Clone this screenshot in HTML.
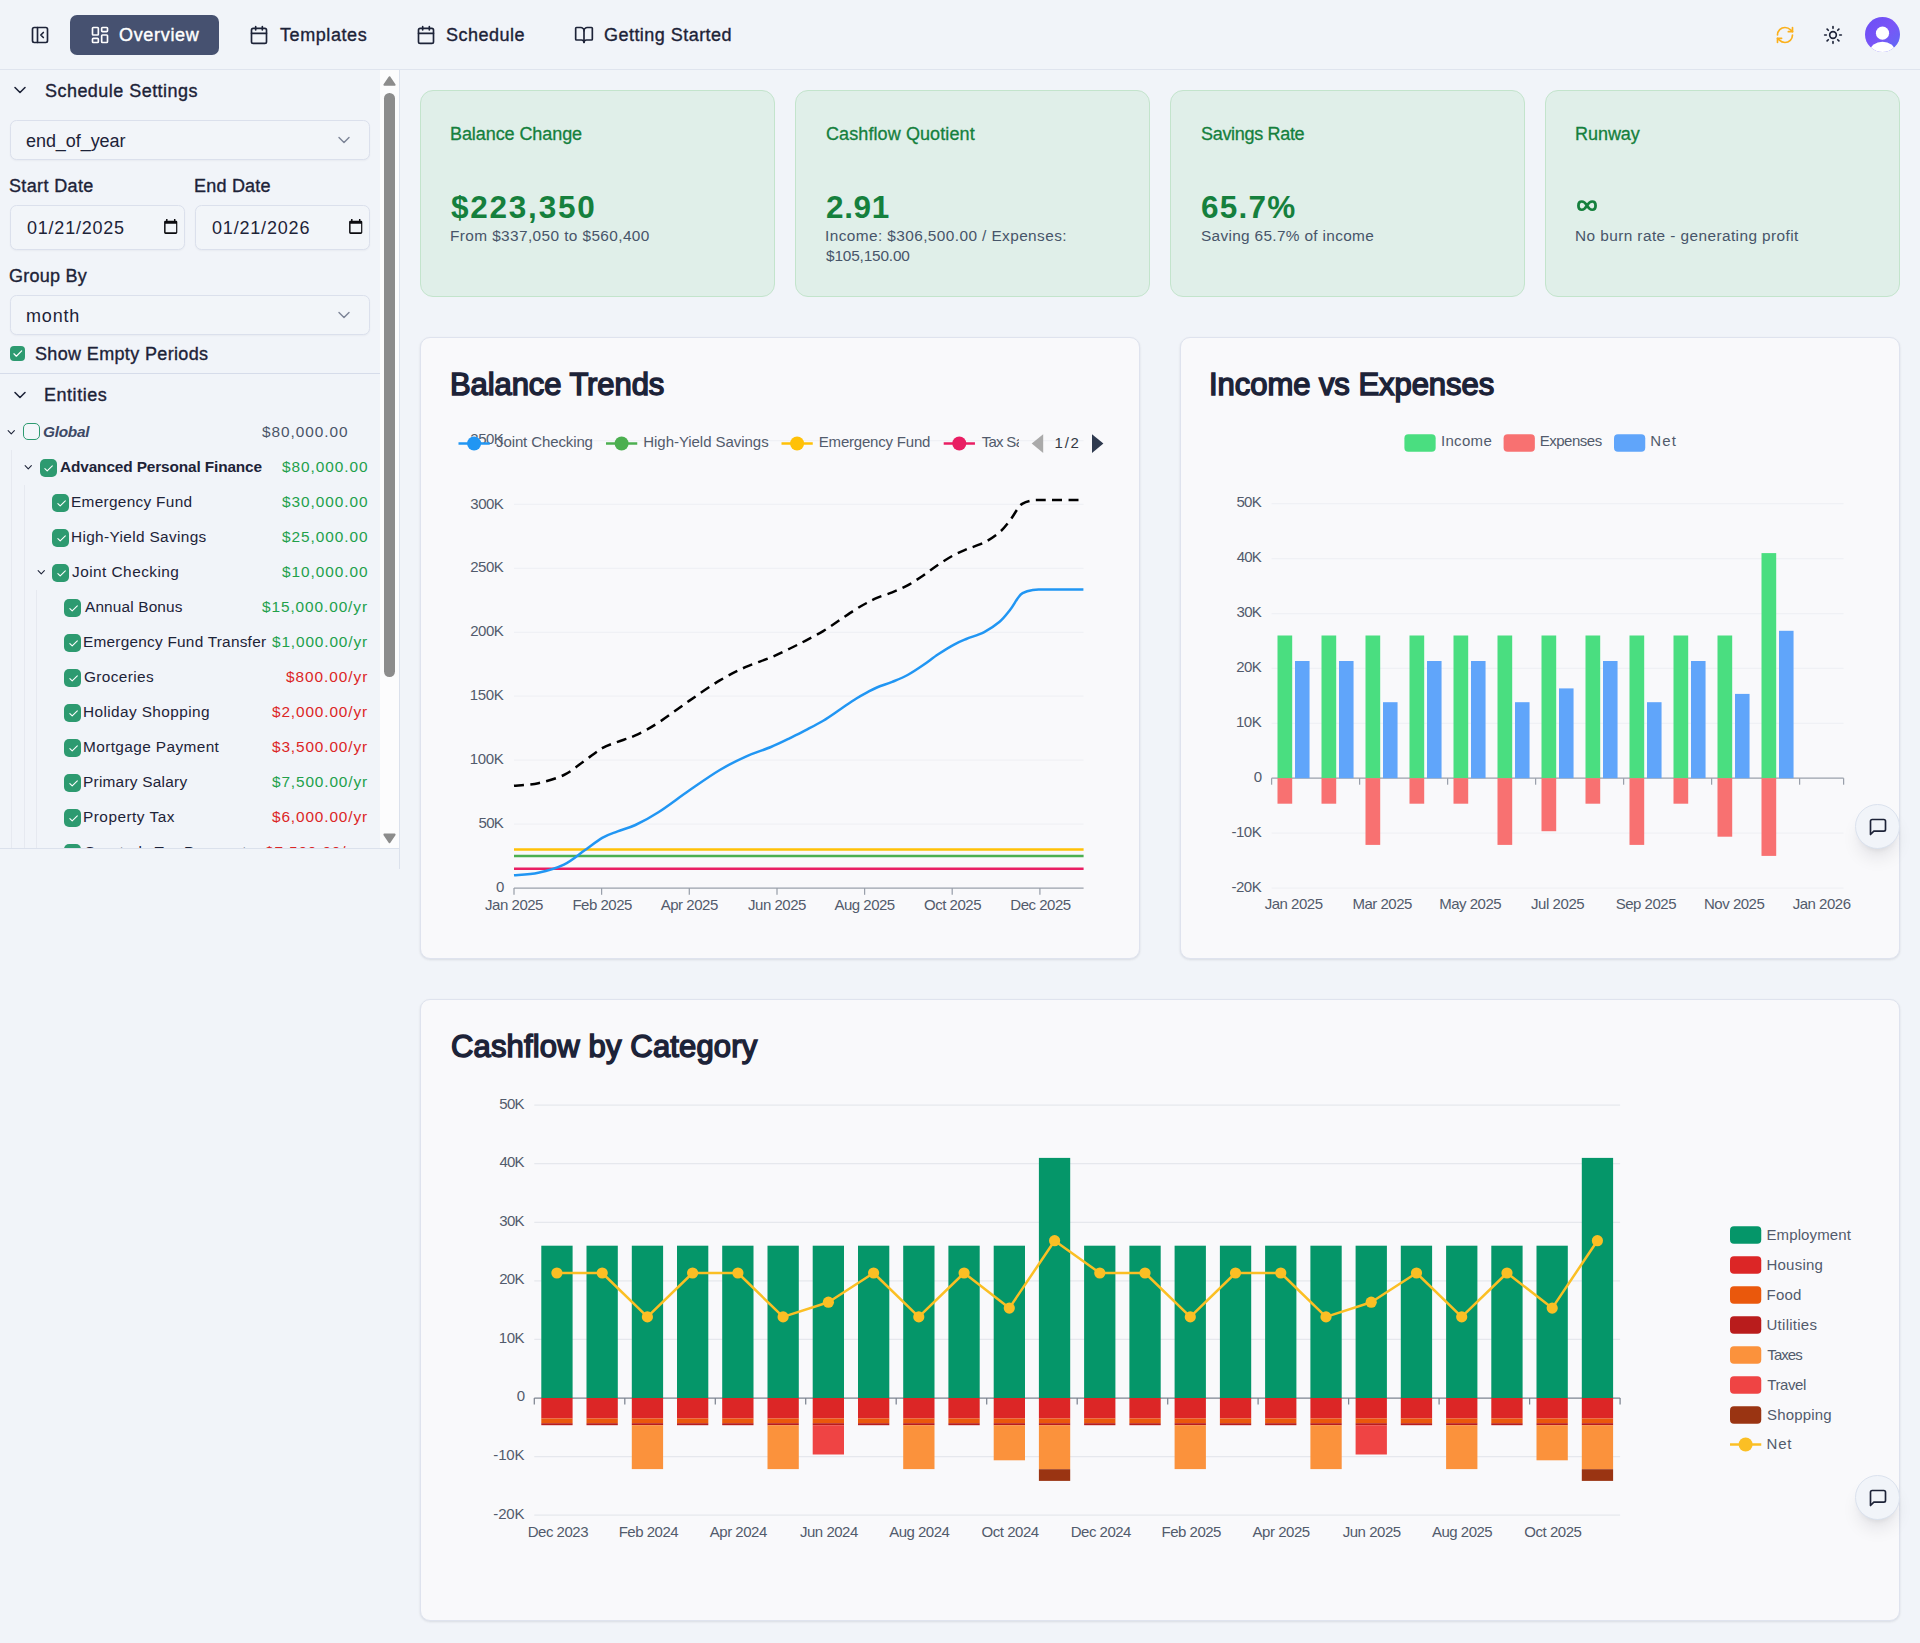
<!DOCTYPE html>
<html lang="en"><head><meta charset="utf-8"><title>Overview</title>
<style>
html,body{margin:0;padding:0}
body{width:1920px;height:1643px;overflow:hidden;background:#f1f4f9;font-family:"Liberation Sans", sans-serif;position:relative}
.a{position:absolute;box-sizing:content-box}
.t{position:absolute;white-space:nowrap;font-family:"Liberation Sans", sans-serif}
.box{position:absolute;box-sizing:border-box;border:1px solid #dbe0ec;border-radius:6.5px;background:#f2f5f9;box-shadow:0 1px 2px rgba(15,23,42,0.04)}
svg{display:block;overflow:visible}
</style></head><body>
<header class="a" style="left:0;top:0;width:1920px;height:69px;border-bottom:1px solid #dfe4ee"></header>
<svg class="a" style="left:30px;top:25px" width="20" height="20" viewBox="0 0 24 24" fill="none" stroke="#1d2338" stroke-width="2" stroke-linecap="round" stroke-linejoin="round" ><rect width="18" height="18" x="3" y="3" rx="2"/><path d="M9 3v18"/><path d="m16 15-3-3 3-3"/></svg>
<nav>
<div class="a" style="left:70px;top:15px;width:149px;height:40px;border-radius:7px;background:#465170"></div>
<svg class="a" style="left:90px;top:25px" width="20" height="20" viewBox="0 0 24 24" fill="none" stroke="#ffffff" stroke-width="2" stroke-linecap="round" stroke-linejoin="round" ><rect width="7" height="9" x="3" y="3" rx="1"/><rect width="7" height="5" x="14" y="3" rx="1"/><rect width="7" height="9" x="14" y="12" rx="1"/><rect width="7" height="5" x="3" y="16" rx="1"/></svg>
<div class="t" style="top:25px;font-size:18px;line-height:20px;color:#ffffff;letter-spacing:0.685px;-webkit-text-stroke:0.4px #ffffff;left:119px;">Overview</div>
<svg class="a" style="left:249px;top:25px" width="20" height="20" viewBox="0 0 24 24" fill="none" stroke="#1d2338" stroke-width="2" stroke-linecap="round" stroke-linejoin="round" ><path d="M8 2v4"/><path d="M16 2v4"/><rect width="18" height="18" x="3" y="4" rx="2"/><path d="M3 10h18"/></svg>
<div class="t" style="top:25px;font-size:18px;line-height:20px;color:#1d2338;letter-spacing:0.577px;-webkit-text-stroke:0.35px #1d2338;left:280px;">Templates</div>
<svg class="a" style="left:416px;top:25px" width="20" height="20" viewBox="0 0 24 24" fill="none" stroke="#1d2338" stroke-width="2" stroke-linecap="round" stroke-linejoin="round" ><path d="M8 2v4"/><path d="M16 2v4"/><rect width="18" height="18" x="3" y="4" rx="2"/><path d="M3 10h18"/></svg>
<div class="t" style="top:25px;font-size:18px;line-height:20px;color:#1d2338;letter-spacing:0.480px;-webkit-text-stroke:0.35px #1d2338;left:446px;">Schedule</div>
<svg class="a" style="left:574.2px;top:25px" width="20" height="20" viewBox="0 0 24 24" fill="none" stroke="#1d2338" stroke-width="2" stroke-linecap="round" stroke-linejoin="round" ><path d="M12 7v14"/><path d="M3 18a1 1 0 0 1-1-1V4a1 1 0 0 1 1-1h5a4 4 0 0 1 4 4 4 4 0 0 1 4-4h5a1 1 0 0 1 1 1v13a1 1 0 0 1-1 1h-6a3 3 0 0 0-3 3 3 3 0 0 0-3-3z"/></svg>
<div class="t" style="top:25px;font-size:18px;line-height:20px;color:#1d2338;letter-spacing:0.464px;-webkit-text-stroke:0.35px #1d2338;left:604px;">Getting Started</div>
</nav>
<svg class="a" style="left:1775px;top:25px" width="20" height="20" viewBox="0 0 24 24" fill="none" stroke="#fbb01c" stroke-width="2" stroke-linecap="round" stroke-linejoin="round" ><path d="M3 12a9 9 0 0 1 9-9 9.75 9.75 0 0 1 6.74 2.74L21 8"/><path d="M21 3v5h-5"/><path d="M21 12a9 9 0 0 1-9 9 9.75 9.75 0 0 1-6.74-2.74L3 16"/><path d="M8 16H3v5"/></svg>
<svg class="a" style="left:1823px;top:25px" width="20" height="20" viewBox="0 0 24 24" fill="none" stroke="#1d2338" stroke-width="2" stroke-linecap="round" stroke-linejoin="round" ><circle cx="12" cy="12" r="4"/><path d="M12 2v2"/><path d="M12 20v2"/><path d="m4.93 4.93 1.41 1.41"/><path d="m17.66 17.66 1.41 1.41"/><path d="M2 12h2"/><path d="M20 12h2"/><path d="m6.34 17.66-1.41 1.41"/><path d="m19.07 4.93-1.41 1.41"/></svg>
<svg class="a" style="left:1865px;top:17px" width="35" height="35" viewBox="0 0 35 35">
<defs><clipPath id="av"><circle cx="17.5" cy="17.5" r="17.5"/></clipPath>
<linearGradient id="avg" x1="0" y1="0" x2="1" y2="1"><stop offset="0" stop-color="#6a4df5"/><stop offset="0.5" stop-color="#7a55f7"/><stop offset="1" stop-color="#5b6cf5"/></linearGradient></defs>
<g clip-path="url(#av)"><rect width="35" height="35" fill="url(#avg)"/>
<circle cx="17.5" cy="16.2" r="6.6" fill="#ffffff"/><ellipse cx="17.5" cy="34.5" rx="12.5" ry="9.8" fill="#ffffff"/></g></svg>
<aside class="a" style="left:0;top:70px;width:399px;height:778px;border-right:1px solid #dbe1ec;border-bottom:1px solid #dbe1ec"></aside>
<div class="a" style="left:399px;top:848px;width:1px;height:21px;background:#dbe1ec"></div>
<div class="a" style="left:380px;top:70px;width:19px;height:778px;background:#fcfcfd"></div>
<div class="a" style="left:384.1px;top:92.8px;width:10.8px;height:584px;border-radius:5.4px;background:#8c8c8c"></div>
<svg class="a" style="left:380px;top:70px" width="19" height="778" viewBox="0 0 19 778"><path d="M4.4 14.8 L9.5 7.2 L14.6 14.8 Z" fill="#8c8c8c" stroke="#8c8c8c" stroke-width="2" stroke-linejoin="round"/><path d="M4.4 764.6 L9.5 772.2 L14.6 764.6 Z" fill="#8c8c8c" stroke="#8c8c8c" stroke-width="2" stroke-linejoin="round"/></svg>
<svg class="a" style="left:10px;top:80px" width="20" height="20" viewBox="0 0 24 24" fill="none" stroke="#1d2338" stroke-width="1.9" stroke-linecap="round" stroke-linejoin="round" ><path d="m6 9 6 6 6-6"/></svg>
<div class="t" style="top:81px;font-size:18px;line-height:20px;color:#1d2338;letter-spacing:0.461px;-webkit-text-stroke:0.35px #1d2338;left:45px;">Schedule Settings</div>
<div class="box" style="left:10px;top:120px;width:360px;height:40px"></div>
<div class="t" style="top:131px;font-size:18px;line-height:20px;color:#1d2338;letter-spacing:-0.062px;left:26px;">end_of_year</div>
<svg class="a" style="left:334px;top:130px" width="20" height="20" viewBox="0 0 24 24" fill="none" stroke="#7d8597" stroke-width="1.7" stroke-linecap="round" stroke-linejoin="round" ><path d="m6 9 6 6 6-6"/></svg>
<div class="t" style="top:176px;font-size:18px;line-height:20px;color:#1d2338;letter-spacing:0.365px;-webkit-text-stroke:0.35px #1d2338;left:9px;">Start Date</div>
<div class="t" style="top:176px;font-size:18px;line-height:20px;color:#1d2338;letter-spacing:0.218px;-webkit-text-stroke:0.35px #1d2338;left:194px;">End Date</div>
<div class="box" style="left:10px;top:205px;width:175px;height:45px"></div>
<div class="t" style="top:218px;font-size:18px;line-height:20px;color:#1d2338;letter-spacing:0.775px;left:27px;">01/21/2025</div>
<svg class="a" style="left:164.4px;top:219.2px" width="13.7" height="15.2" viewBox="0 0 14 15.2" preserveAspectRatio="none"><path fill-rule="evenodd" fill="#0b0b0f" d="M1.3 1.7h11.1a1.2 1.2 0 0 1 1.2 1.2v10.6a1.5 1.5 0 0 1-1.5 1.5h-10.5a1.5 1.5 0 0 1-1.5-1.5v-10.6a1.2 1.2 0 0 1 1.2-1.2zM1.6 4.7v8.5h10.8v-8.5z"/><rect x="2.1" y="0" width="1.5" height="2.4" fill="#0b0b0f"/><rect x="10.2" y="0" width="1.5" height="2.4" fill="#0b0b0f"/></svg>
<div class="box" style="left:195px;top:205px;width:175px;height:45px"></div>
<div class="t" style="top:218px;font-size:18px;line-height:20px;color:#1d2338;letter-spacing:0.812px;left:212px;">01/21/2026</div>
<svg class="a" style="left:349.4px;top:219.2px" width="13.7" height="15.2" viewBox="0 0 14 15.2" preserveAspectRatio="none"><path fill-rule="evenodd" fill="#0b0b0f" d="M1.3 1.7h11.1a1.2 1.2 0 0 1 1.2 1.2v10.6a1.5 1.5 0 0 1-1.5 1.5h-10.5a1.5 1.5 0 0 1-1.5-1.5v-10.6a1.2 1.2 0 0 1 1.2-1.2zM1.6 4.7v8.5h10.8v-8.5z"/><rect x="2.1" y="0" width="1.5" height="2.4" fill="#0b0b0f"/><rect x="10.2" y="0" width="1.5" height="2.4" fill="#0b0b0f"/></svg>
<div class="t" style="top:266px;font-size:18px;line-height:20px;color:#1d2338;letter-spacing:0.244px;-webkit-text-stroke:0.35px #1d2338;left:9px;">Group By</div>
<div class="box" style="left:10px;top:295px;width:360px;height:39.5px"></div>
<div class="t" style="top:306px;font-size:18px;line-height:20px;color:#1d2338;letter-spacing:0.834px;left:26px;">month</div>
<svg class="a" style="left:334px;top:305px" width="20" height="20" viewBox="0 0 24 24" fill="none" stroke="#7d8597" stroke-width="1.7" stroke-linecap="round" stroke-linejoin="round" ><path d="m6 9 6 6 6-6"/></svg>
<div class="a" style="left:10px;top:346.3px;width:15px;height:15px;border-radius:4px;background:#2d9a70"></div>
<svg class="a" style="left:11.7px;top:348px" width="11.6" height="11.6" viewBox="0 0 24 24" fill="none" stroke="#ffffff" stroke-width="2.5" stroke-linecap="round" stroke-linejoin="round" ><path d="M20 6 9 17l-5-5"/></svg>
<div class="t" style="top:344px;font-size:18px;line-height:20px;color:#1d2338;letter-spacing:0.353px;-webkit-text-stroke:0.35px #1d2338;left:35px;">Show Empty Periods</div>
<div class="a" style="left:0;top:373px;width:380px;height:1px;background:#d6dcea"></div>
<svg class="a" style="left:10px;top:385px" width="20" height="20" viewBox="0 0 24 24" fill="none" stroke="#1d2338" stroke-width="1.9" stroke-linecap="round" stroke-linejoin="round" ><path d="m6 9 6 6 6-6"/></svg>
<div class="t" style="top:385px;font-size:18px;line-height:20px;color:#1d2338;letter-spacing:0.529px;-webkit-text-stroke:0.35px #1d2338;left:44px;">Entities</div>
<div class="a" style="left:0;top:410px;width:380px;height:438px;overflow:hidden">
<div class="a" style="left:11px;top:40px;width:1px;height:500px;background:#e6e9f0"></div>
<div class="a" style="left:24px;top:75px;width:1px;height:500px;background:#e6e9f0"></div>
<div class="a" style="left:36px;top:180px;width:1px;height:500px;background:#e6e9f0"></div>
<svg class="a" style="left:5.0px;top:15.949999999999989px" width="12.5" height="12.5" viewBox="0 0 24 24" fill="none" stroke="#1d2338" stroke-width="2.1" stroke-linecap="round" stroke-linejoin="round" ><path d="m6 9 6 6 6-6"/></svg>
<div class="a" style="left:22.5px;top:12.5px;width:15px;height:15px;border-radius:5px;border:1.25px solid #2d9a70;background:#f3f6fa"></div>
<div class="t" style="top:13px;font-size:15.4px;line-height:17px;color:#3d4966;font-weight:700;letter-spacing:-0.279px;font-style:italic;left:43px;">Global</div>
<div class="t" style="top:13px;font-size:15.4px;line-height:17px;color:#4a5568;letter-spacing:0.949px;left:262px;">$80,000.00</div>
<svg class="a" style="left:21.95px;top:50.94999999999999px" width="12.5" height="12.5" viewBox="0 0 24 24" fill="none" stroke="#1d2338" stroke-width="2.1" stroke-linecap="round" stroke-linejoin="round" ><path d="m6 9 6 6 6-6"/></svg>
<div class="a" style="left:40px;top:49.05000000000001px;width:17px;height:17.5px;border-radius:5px;background:#2d9a70"></div>
<svg class="a" style="left:43.4px;top:52.750000000000014px" width="11.2" height="11.2" viewBox="0 0 24 24" fill="none" stroke="#ffffff" stroke-width="2.3" stroke-linecap="round" stroke-linejoin="round" ><path d="M20 6 9 17l-5-5"/></svg>
<div class="t" style="top:48px;font-size:15.4px;line-height:17px;color:#1d2338;font-weight:700;letter-spacing:-0.132px;left:60px;">Advanced Personal Finance</div>
<div class="t" style="top:48px;font-size:15.4px;line-height:17px;color:#22a04b;letter-spacing:0.960px;left:282px;">$80,000.00</div>
<div class="a" style="left:52.2px;top:84.25px;width:17px;height:17.5px;border-radius:5px;background:#2d9a70"></div>
<svg class="a" style="left:55.6px;top:87.95px" width="11.2" height="11.2" viewBox="0 0 24 24" fill="none" stroke="#ffffff" stroke-width="2.3" stroke-linecap="round" stroke-linejoin="round" ><path d="M20 6 9 17l-5-5"/></svg>
<div class="t" style="top:83px;font-size:15.4px;line-height:17px;color:#1d2338;letter-spacing:0.297px;left:71px;">Emergency Fund</div>
<div class="t" style="top:83px;font-size:15.4px;line-height:17px;color:#22a04b;letter-spacing:0.960px;left:282px;">$30,000.00</div>
<div class="a" style="left:52.2px;top:119.25px;width:17px;height:17.5px;border-radius:5px;background:#2d9a70"></div>
<svg class="a" style="left:55.6px;top:122.95px" width="11.2" height="11.2" viewBox="0 0 24 24" fill="none" stroke="#ffffff" stroke-width="2.3" stroke-linecap="round" stroke-linejoin="round" ><path d="M20 6 9 17l-5-5"/></svg>
<div class="t" style="top:118px;font-size:15.4px;line-height:17px;color:#1d2338;letter-spacing:0.339px;left:71px;">High-Yield Savings</div>
<div class="t" style="top:118px;font-size:15.4px;line-height:17px;color:#22a04b;letter-spacing:0.960px;left:282px;">$25,000.00</div>
<svg class="a" style="left:35.05px;top:156.14999999999998px" width="12.5" height="12.5" viewBox="0 0 24 24" fill="none" stroke="#1d2338" stroke-width="2.1" stroke-linecap="round" stroke-linejoin="round" ><path d="m6 9 6 6 6-6"/></svg>
<div class="a" style="left:52.2px;top:154.25px;width:17px;height:17.5px;border-radius:5px;background:#2d9a70"></div>
<svg class="a" style="left:55.6px;top:157.95px" width="11.2" height="11.2" viewBox="0 0 24 24" fill="none" stroke="#ffffff" stroke-width="2.3" stroke-linecap="round" stroke-linejoin="round" ><path d="M20 6 9 17l-5-5"/></svg>
<div class="t" style="top:153px;font-size:15.4px;line-height:17px;color:#1d2338;letter-spacing:0.460px;left:72px;">Joint Checking</div>
<div class="t" style="top:153px;font-size:15.4px;line-height:17px;color:#22a04b;letter-spacing:0.960px;left:282px;">$10,000.00</div>
<div class="a" style="left:64.3px;top:189.25px;width:17px;height:17.5px;border-radius:5px;background:#2d9a70"></div>
<svg class="a" style="left:67.7px;top:192.95px" width="11.2" height="11.2" viewBox="0 0 24 24" fill="none" stroke="#ffffff" stroke-width="2.3" stroke-linecap="round" stroke-linejoin="round" ><path d="M20 6 9 17l-5-5"/></svg>
<div class="t" style="top:188px;font-size:15.4px;line-height:17px;color:#1d2338;letter-spacing:0.150px;left:85px;">Annual Bonus</div>
<div class="t" style="top:188px;font-size:15.4px;line-height:17px;color:#22a04b;letter-spacing:0.908px;left:262px;">$15,000.00/yr</div>
<div class="a" style="left:64.3px;top:224.25px;width:17px;height:17.5px;border-radius:5px;background:#2d9a70"></div>
<svg class="a" style="left:67.7px;top:227.95px" width="11.2" height="11.2" viewBox="0 0 24 24" fill="none" stroke="#ffffff" stroke-width="2.3" stroke-linecap="round" stroke-linejoin="round" ><path d="M20 6 9 17l-5-5"/></svg>
<div class="t" style="top:223px;font-size:15.4px;line-height:17px;color:#1d2338;letter-spacing:0.233px;left:83px;">Emergency Fund Transfer</div>
<div class="t" style="top:223px;font-size:15.4px;line-height:17px;color:#22a04b;letter-spacing:0.869px;left:272px;">$1,000.00/yr</div>
<div class="a" style="left:64.3px;top:259.25px;width:17px;height:17.5px;border-radius:5px;background:#2d9a70"></div>
<svg class="a" style="left:67.7px;top:262.95px" width="11.2" height="11.2" viewBox="0 0 24 24" fill="none" stroke="#ffffff" stroke-width="2.3" stroke-linecap="round" stroke-linejoin="round" ><path d="M20 6 9 17l-5-5"/></svg>
<div class="t" style="top:258px;font-size:15.4px;line-height:17px;color:#1d2338;letter-spacing:0.378px;left:84px;">Groceries</div>
<div class="t" style="top:258px;font-size:15.4px;line-height:17px;color:#dc2626;letter-spacing:0.955px;left:286px;">$800.00/yr</div>
<div class="a" style="left:64.3px;top:294.25px;width:17px;height:17.5px;border-radius:5px;background:#2d9a70"></div>
<svg class="a" style="left:67.7px;top:297.95px" width="11.2" height="11.2" viewBox="0 0 24 24" fill="none" stroke="#ffffff" stroke-width="2.3" stroke-linecap="round" stroke-linejoin="round" ><path d="M20 6 9 17l-5-5"/></svg>
<div class="t" style="top:293px;font-size:15.4px;line-height:17px;color:#1d2338;letter-spacing:0.387px;left:83px;">Holiday Shopping</div>
<div class="t" style="top:293px;font-size:15.4px;line-height:17px;color:#dc2626;letter-spacing:0.869px;left:272px;">$2,000.00/yr</div>
<div class="a" style="left:64.3px;top:329.25px;width:17px;height:17.5px;border-radius:5px;background:#2d9a70"></div>
<svg class="a" style="left:67.7px;top:332.95px" width="11.2" height="11.2" viewBox="0 0 24 24" fill="none" stroke="#ffffff" stroke-width="2.3" stroke-linecap="round" stroke-linejoin="round" ><path d="M20 6 9 17l-5-5"/></svg>
<div class="t" style="top:328px;font-size:15.4px;line-height:17px;color:#1d2338;letter-spacing:0.390px;left:83px;">Mortgage Payment</div>
<div class="t" style="top:328px;font-size:15.4px;line-height:17px;color:#dc2626;letter-spacing:0.869px;left:272px;">$3,500.00/yr</div>
<div class="a" style="left:64.3px;top:364.25px;width:17px;height:17.5px;border-radius:5px;background:#2d9a70"></div>
<svg class="a" style="left:67.7px;top:367.95px" width="11.2" height="11.2" viewBox="0 0 24 24" fill="none" stroke="#ffffff" stroke-width="2.3" stroke-linecap="round" stroke-linejoin="round" ><path d="M20 6 9 17l-5-5"/></svg>
<div class="t" style="top:363px;font-size:15.4px;line-height:17px;color:#1d2338;letter-spacing:0.245px;left:83px;">Primary Salary</div>
<div class="t" style="top:363px;font-size:15.4px;line-height:17px;color:#22a04b;letter-spacing:0.869px;left:272px;">$7,500.00/yr</div>
<div class="a" style="left:64.3px;top:399.25px;width:17px;height:17.5px;border-radius:5px;background:#2d9a70"></div>
<svg class="a" style="left:67.7px;top:402.95px" width="11.2" height="11.2" viewBox="0 0 24 24" fill="none" stroke="#ffffff" stroke-width="2.3" stroke-linecap="round" stroke-linejoin="round" ><path d="M20 6 9 17l-5-5"/></svg>
<div class="t" style="top:398px;font-size:15.4px;line-height:17px;color:#1d2338;letter-spacing:0.485px;left:83px;">Property Tax</div>
<div class="t" style="top:398px;font-size:15.4px;line-height:17px;color:#dc2626;letter-spacing:0.869px;left:272px;">$6,000.00/yr</div>
<div class="a" style="left:64.3px;top:434.25px;width:17px;height:17.5px;border-radius:5px;background:#2d9a70"></div>
<svg class="a" style="left:67.7px;top:437.95px" width="11.2" height="11.2" viewBox="0 0 24 24" fill="none" stroke="#ffffff" stroke-width="2.3" stroke-linecap="round" stroke-linejoin="round" ><path d="M20 6 9 17l-5-5"/></svg>
<div class="t" style="top:433px;font-size:15.4px;line-height:17px;color:#1d2338;letter-spacing:0.316px;left:84px;">Quarterly Tax Payment</div>
<div class="t" style="top:433px;font-size:15.4px;line-height:17px;color:#dc2626;letter-spacing:0.869px;left:265px;">$7,500.00/yr</div>
</div>
<main>
<div class="a" style="left:420px;top:90px;width:353px;height:205px;border-radius:13px;background:#e0efe9;border:1px solid #c3e4cc"></div>
<div class="t" style="top:124px;font-size:18px;line-height:20px;color:#15803d;letter-spacing:-0.079px;-webkit-text-stroke:0.3px #15803d;left:450px;">Balance Change</div>
<div class="t" style="top:189px;font-size:31.5px;line-height:36px;color:#15803d;font-weight:700;letter-spacing:1.761px;left:451px;">$223,350</div>
<div class="t" style="top:227px;font-size:15.4px;line-height:17px;color:#475569;letter-spacing:0.392px;left:450px;">From $337,050 to $560,400</div>
<div class="a" style="left:795px;top:90px;width:353px;height:205px;border-radius:13px;background:#e0efe9;border:1px solid #c3e4cc"></div>
<div class="t" style="top:124px;font-size:18px;line-height:20px;color:#15803d;letter-spacing:0.098px;-webkit-text-stroke:0.3px #15803d;left:826px;">Cashflow Quotient</div>
<div class="t" style="top:189px;font-size:31.5px;line-height:36px;color:#15803d;font-weight:700;letter-spacing:0.654px;left:826px;">2.91</div>
<div class="t" style="top:227px;font-size:15.4px;line-height:17px;color:#475569;letter-spacing:0.407px;left:825px;">Income: $306,500.00 / Expenses:</div>
<div class="t" style="top:247px;font-size:15.4px;line-height:17px;color:#475569;letter-spacing:-0.172px;left:826px;">$105,150.00</div>
<div class="a" style="left:1170px;top:90px;width:353px;height:205px;border-radius:13px;background:#e0efe9;border:1px solid #c3e4cc"></div>
<div class="t" style="top:124px;font-size:18px;line-height:20px;color:#15803d;letter-spacing:-0.313px;-webkit-text-stroke:0.3px #15803d;left:1201px;">Savings Rate</div>
<div class="t" style="top:189px;font-size:31.5px;line-height:36px;color:#15803d;font-weight:700;letter-spacing:1.217px;left:1201px;">65.7%</div>
<div class="t" style="top:227px;font-size:15.4px;line-height:17px;color:#475569;letter-spacing:0.324px;left:1201px;">Saving 65.7% of income</div>
<div class="a" style="left:1545px;top:90px;width:353px;height:205px;border-radius:13px;background:#e0efe9;border:1px solid #c3e4cc"></div>
<div class="t" style="top:124px;font-size:18px;line-height:20px;color:#15803d;letter-spacing:-0.044px;-webkit-text-stroke:0.3px #15803d;left:1575px;">Runway</div>
<svg class="a" style="left:1577.3px;top:200.2px" width="20" height="11.3" viewBox="0 0 22 14" preserveAspectRatio="none"><path d="M11 7 C9 3.2 7.2 2 5.3 2 C3 2 1.6 4 1.6 7 C1.6 10 3 12 5.3 12 C7.2 12 9 10.8 11 7 C13 3.2 14.8 2 16.7 2 C19 2 20.4 4 20.4 7 C20.4 10 19 12 16.7 12 C14.8 12 13 10.8 11 7 Z" fill="none" stroke="#15803d" stroke-width="3.1"/></svg>
<div class="t" style="top:227px;font-size:15.4px;line-height:17px;color:#475569;letter-spacing:0.417px;left:1575px;">No burn rate - generating profit</div>
<div class="a" style="left:420px;top:337px;width:718px;height:620px;border-radius:10px;background:#f9f9fb;border:1px solid #dfe3ee;box-shadow:0 1px 3px rgba(15,23,42,0.07),0 1px 2px rgba(15,23,42,0.04)"></div>
<div class="a" style="left:1180px;top:337px;width:718px;height:620px;border-radius:10px;background:#f9f9fb;border:1px solid #dfe3ee;box-shadow:0 1px 3px rgba(15,23,42,0.07),0 1px 2px rgba(15,23,42,0.04)"></div>
<div class="a" style="left:420px;top:999px;width:1478px;height:619.5px;border-radius:10px;background:#f9f9fb;border:1px solid #dfe3ee;box-shadow:0 1px 3px rgba(15,23,42,0.07),0 1px 2px rgba(15,23,42,0.04)"></div>
<div class="t" style="top:367px;font-size:31px;line-height:35px;color:#1d2338;letter-spacing:-0.085px;-webkit-text-stroke:1.5px #1d2338;left:450px;">Balance Trends</div>
<div class="t" style="top:367px;font-size:31px;line-height:35px;color:#1d2338;letter-spacing:-0.050px;-webkit-text-stroke:1.5px #1d2338;left:1209px;">Income vs Expenses</div>
<div class="t" style="top:1029px;font-size:31px;line-height:35px;color:#1d2338;letter-spacing:0.157px;-webkit-text-stroke:1.5px #1d2338;left:451px;">Cashflow by Category</div>
<svg class="a" style="left:0;top:0" width="1920" height="1643" viewBox="0 0 1920 1643" font-family='"Liberation Sans", sans-serif'>
<text x="503.37" y="443.6" text-anchor="end" font-size="15" fill="#525b6c" letter-spacing="-0.497">350K</text>
<text x="504.29" y="892.1" text-anchor="end" font-size="15" fill="#525b6c">0</text>
<line x1="514.0" x2="1083.6" y1="824.1" y2="824.1" stroke="#f0f1f5" stroke-width="1.25"/>
<text x="503.16" y="828.1700000000001" text-anchor="end" font-size="15" fill="#525b6c" letter-spacing="-0.710">50K</text>
<line x1="514.0" x2="1083.6" y1="760.1" y2="760.1" stroke="#f0f1f5" stroke-width="1.25"/>
<text x="503.56" y="764.24" text-anchor="end" font-size="15" fill="#525b6c" letter-spacing="-0.307">100K</text>
<line x1="514.0" x2="1083.6" y1="696.2" y2="696.2" stroke="#f0f1f5" stroke-width="1.25"/>
<text x="503.56" y="700.3100000000001" text-anchor="end" font-size="15" fill="#525b6c" letter-spacing="-0.307">150K</text>
<line x1="514.0" x2="1083.6" y1="632.3" y2="632.3" stroke="#f0f1f5" stroke-width="1.25"/>
<text x="503.43" y="636.38" text-anchor="end" font-size="15" fill="#525b6c" letter-spacing="-0.436">200K</text>
<line x1="514.0" x2="1083.6" y1="568.4" y2="568.4" stroke="#f0f1f5" stroke-width="1.25"/>
<text x="503.43" y="572.45" text-anchor="end" font-size="15" fill="#525b6c" letter-spacing="-0.436">250K</text>
<line x1="514.0" x2="1083.6" y1="504.4" y2="504.4" stroke="#f0f1f5" stroke-width="1.25"/>
<text x="503.37" y="508.52000000000004" text-anchor="end" font-size="15" fill="#525b6c" letter-spacing="-0.497">300K</text>
<line x1="514.0" x2="1083.6" y1="440.5" y2="440.5" stroke="#f0f1f5" stroke-width="1.25"/>
<line x1="514.0" x2="1083.6" y1="888.0" y2="888.0" stroke="#9aa0ab" stroke-width="1.25"/>
<line x1="514.0" x2="514.0" y1="888.0" y2="894.8" stroke="#9aa0ab" stroke-width="1.25"/>
<text x="514.04" y="909.5" text-anchor="middle" font-size="15" fill="#525b6c" letter-spacing="-0.478">Jan 2025</text>
<line x1="601.6" x2="601.6" y1="888.0" y2="894.8" stroke="#9aa0ab" stroke-width="1.25"/>
<text x="602.19" y="909.5" text-anchor="middle" font-size="15" fill="#525b6c" letter-spacing="-0.483">Feb 2025</text>
<line x1="689.3" x2="689.3" y1="888.0" y2="894.8" stroke="#9aa0ab" stroke-width="1.25"/>
<text x="689.24" y="909.5" text-anchor="middle" font-size="15" fill="#525b6c" letter-spacing="-0.473">Apr 2025</text>
<line x1="777.0" x2="777.0" y1="888.0" y2="894.8" stroke="#9aa0ab" stroke-width="1.25"/>
<text x="776.99" y="909.5" text-anchor="middle" font-size="15" fill="#525b6c" letter-spacing="-0.478">Jun 2025</text>
<line x1="864.6" x2="864.6" y1="888.0" y2="894.8" stroke="#9aa0ab" stroke-width="1.25"/>
<text x="864.55" y="909.5" text-anchor="middle" font-size="15" fill="#525b6c" letter-spacing="-0.499">Aug 2025</text>
<line x1="952.2" x2="952.2" y1="888.0" y2="894.8" stroke="#9aa0ab" stroke-width="1.25"/>
<text x="952.52" y="909.5" text-anchor="middle" font-size="15" fill="#525b6c" letter-spacing="-0.468">Oct 2025</text>
<line x1="1039.9" x2="1039.9" y1="888.0" y2="894.8" stroke="#9aa0ab" stroke-width="1.25"/>
<text x="1040.45" y="909.5" text-anchor="middle" font-size="15" fill="#525b6c" letter-spacing="-0.490">Dec 2025</text>
<line x1="514.0" x2="1083.6" y1="849.6" y2="849.6" stroke="#ffc107" stroke-width="2.5"/>
<line x1="514.0" x2="1083.6" y1="856.0" y2="856.0" stroke="#4caf50" stroke-width="2.5"/>
<line x1="514.0" x2="1083.6" y1="868.8" y2="868.8" stroke="#e91e63" stroke-width="2.5"/>
<path d="M514.0 875.3 C518.0 874.9 530.0 874.6 538.3 872.8 C546.6 871.0 556.2 868.3 563.9 864.6 C571.6 860.9 577.9 855.1 584.3 850.6 C590.7 846.1 596.7 841.0 602.2 837.8 C607.8 834.6 612.1 833.5 617.6 831.4 C623.1 829.3 628.6 828.2 635.4 825.0 C642.2 821.8 649.4 818.0 658.4 812.2 C667.4 806.5 678.9 797.5 689.1 790.5 C699.3 783.5 710.4 775.6 719.8 770.0 C729.2 764.4 736.8 760.6 745.3 756.8 C753.8 753.0 763.4 750.1 770.9 747.0 C778.4 743.9 784.3 740.9 790.0 738.1 C795.7 735.3 799.8 733.3 805.3 730.4 C810.8 727.5 817.2 724.3 823.2 720.7 C829.2 717.1 835.6 712.4 841.1 708.7 C846.6 705.0 852.1 701.2 856.4 698.5 C860.7 695.8 863.3 694.4 866.7 692.6 C870.1 690.8 872.6 689.3 876.9 687.5 C881.1 685.7 887.1 684.0 892.2 681.9 C897.3 679.8 902.5 677.8 907.6 675.0 C912.7 672.2 917.8 668.8 922.9 665.3 C928.0 661.8 933.1 657.7 938.2 654.3 C943.3 650.9 948.9 647.3 953.6 644.8 C958.3 642.2 961.2 641.1 966.3 639.0 C971.4 636.9 978.7 635.0 984.2 632.1 C989.8 629.2 995.3 625.4 999.6 621.8 C1003.9 618.2 1006.8 614.1 1009.8 610.3 C1012.8 606.5 1015.3 601.6 1017.4 598.8 C1019.5 595.9 1020.0 594.7 1022.6 593.2 C1025.2 591.7 1029.0 590.5 1032.8 589.9 C1036.6 589.3 1037.2 589.6 1045.6 589.6 C1054.0 589.6 1077.1 589.6 1083.4 589.6" fill="none" stroke="#2196f3" stroke-width="2.5" stroke-linejoin="round"/>
<path d="M514.0 785.7 C518.0 785.3 530.0 785.0 538.3 783.2 C546.6 781.4 556.2 778.7 563.9 775.0 C571.6 771.3 577.9 765.5 584.3 761.0 C590.7 756.5 596.7 751.4 602.2 748.2 C607.8 745.0 612.1 743.9 617.6 741.8 C623.1 739.7 628.6 738.6 635.4 735.4 C642.2 732.2 649.4 728.4 658.4 722.6 C667.4 716.9 678.9 707.9 689.1 700.9 C699.3 693.9 710.4 686.0 719.8 680.4 C729.2 674.8 736.8 671.0 745.3 667.2 C753.8 663.4 763.4 660.5 770.9 657.4 C778.4 654.3 784.3 651.3 790.0 648.5 C795.7 645.7 799.8 643.7 805.3 640.8 C810.8 637.9 817.2 634.7 823.2 631.1 C829.2 627.5 835.6 622.8 841.1 619.1 C846.6 615.4 852.1 611.6 856.4 608.9 C860.7 606.2 863.3 604.8 866.7 603.0 C870.1 601.2 872.6 599.7 876.9 597.9 C881.1 596.1 887.1 594.4 892.2 592.3 C897.3 590.2 902.5 588.2 907.6 585.4 C912.7 582.6 917.8 579.1 922.9 575.7 C928.0 572.2 933.1 568.1 938.2 564.7 C943.3 561.3 948.9 557.7 953.6 555.2 C958.3 552.6 961.2 551.5 966.3 549.4 C971.4 547.3 978.7 545.4 984.2 542.5 C989.8 539.6 995.3 535.8 999.6 532.2 C1003.9 528.6 1006.8 524.5 1009.8 520.7 C1012.8 516.9 1015.3 512.0 1017.4 509.2 C1019.5 506.3 1020.0 505.1 1022.6 503.6 C1025.2 502.1 1029.0 500.9 1032.8 500.3 C1036.6 499.7 1037.2 500.1 1045.6 500.0 C1054.0 499.9 1077.1 500.0 1083.4 500.0" fill="none" stroke="#000" stroke-width="2.5" stroke-dasharray="10 6.3" stroke-linejoin="round"/>
<line x1="458.5" x2="489.75" y1="443.5" y2="443.5" stroke="#2196f3" stroke-width="2.5"/><circle cx="474.1" cy="443.5" r="7" fill="#2196f3"/>
<text x="496.07" y="447.2" text-anchor="start" font-size="15" fill="#525b6c" letter-spacing="-0.114">Joint Checking</text>
<line x1="606" x2="637.25" y1="443.5" y2="443.5" stroke="#4caf50" stroke-width="2.5"/><circle cx="621.6" cy="443.5" r="7" fill="#4caf50"/>
<text x="643.27" y="447.2" text-anchor="start" font-size="15" fill="#525b6c" letter-spacing="-0.047">High-Yield Savings</text>
<line x1="781.5" x2="812.75" y1="443.5" y2="443.5" stroke="#ffc107" stroke-width="2.5"/><circle cx="797.1" cy="443.5" r="7" fill="#ffc107"/>
<text x="818.77" y="447.2" text-anchor="start" font-size="15" fill="#525b6c" letter-spacing="-0.194">Emergency Fund</text>
<line x1="943.7" x2="974.95" y1="443.5" y2="443.5" stroke="#e91e63" stroke-width="2.5"/><circle cx="959.3000000000001" cy="443.5" r="7" fill="#e91e63"/>
<clipPath id="lc"><rect x="940" y="430" width="79" height="30"/></clipPath>
<g clip-path="url(#lc)"><text x="981.66" y="447.2" text-anchor="start" font-size="15" fill="#525b6c" letter-spacing="-0.700">Tax Savings</text></g>
<path d="M1043.2 434.3 L1043.2 452.9 L1031.7 443.6 Z" fill="#aaaaaa"/>
<text x="1067.61" y="447.6" text-anchor="middle" font-size="15" fill="#333944" letter-spacing="1.772">1/2</text>
<path d="M1092 434.3 L1092 452.9 L1103.4 443.6 Z" fill="#2f3a4f"/>
<line x1="1271.6" x2="1843.6" y1="888.0" y2="888.0" stroke="#f0f1f5" stroke-width="1.25"/>
<text x="1261.32" y="891.5" text-anchor="end" font-size="15" fill="#525b6c" letter-spacing="-0.450">-20K</text>
<line x1="1271.6" x2="1843.6" y1="833.1" y2="833.1" stroke="#f0f1f5" stroke-width="1.25"/>
<text x="1261.32" y="836.6" text-anchor="end" font-size="15" fill="#525b6c" letter-spacing="-0.450">-10K</text>
<text x="1262.19" y="781.7" text-anchor="end" font-size="15" fill="#525b6c">0</text>
<line x1="1271.6" x2="1843.6" y1="723.3" y2="723.3" stroke="#f0f1f5" stroke-width="1.25"/>
<text x="1261.33" y="726.8000000000001" text-anchor="end" font-size="15" fill="#525b6c" letter-spacing="-0.439">10K</text>
<line x1="1271.6" x2="1843.6" y1="668.4" y2="668.4" stroke="#f0f1f5" stroke-width="1.25"/>
<text x="1261.14" y="671.9000000000001" text-anchor="end" font-size="15" fill="#525b6c" letter-spacing="-0.633">20K</text>
<line x1="1271.6" x2="1843.6" y1="613.5" y2="613.5" stroke="#f0f1f5" stroke-width="1.25"/>
<text x="1261.04" y="617.0" text-anchor="end" font-size="15" fill="#525b6c" letter-spacing="-0.725">30K</text>
<line x1="1271.6" x2="1843.6" y1="558.6" y2="558.6" stroke="#f0f1f5" stroke-width="1.25"/>
<text x="1260.93" y="562.1" text-anchor="end" font-size="15" fill="#525b6c" letter-spacing="-0.838">40K</text>
<line x1="1271.6" x2="1843.6" y1="503.7" y2="503.7" stroke="#f0f1f5" stroke-width="1.25"/>
<text x="1261.06" y="507.20000000000005" text-anchor="end" font-size="15" fill="#525b6c" letter-spacing="-0.710">50K</text>
<line x1="1271.6" x2="1843.6" y1="778.2" y2="778.2" stroke="#9aa0ab" stroke-width="1.25"/>
<line x1="1271.6" x2="1271.6" y1="778.2" y2="784.7" stroke="#9aa0ab" stroke-width="1.25"/>
<line x1="1359.6" x2="1359.6" y1="778.2" y2="784.7" stroke="#9aa0ab" stroke-width="1.25"/>
<line x1="1447.6" x2="1447.6" y1="778.2" y2="784.7" stroke="#9aa0ab" stroke-width="1.25"/>
<line x1="1535.6" x2="1535.6" y1="778.2" y2="784.7" stroke="#9aa0ab" stroke-width="1.25"/>
<line x1="1623.6" x2="1623.6" y1="778.2" y2="784.7" stroke="#9aa0ab" stroke-width="1.25"/>
<line x1="1711.6" x2="1711.6" y1="778.2" y2="784.7" stroke="#9aa0ab" stroke-width="1.25"/>
<line x1="1799.6" x2="1799.6" y1="778.2" y2="784.7" stroke="#9aa0ab" stroke-width="1.25"/>
<line x1="1843.6" x2="1843.6" y1="778.2" y2="784.7" stroke="#9aa0ab" stroke-width="1.25"/>
<rect x="1277.5" y="635.5" width="14.7" height="142.7" fill="#4ade80"/>
<rect x="1277.5" y="778.2" width="14.7" height="25.5" fill="#f87171"/>
<rect x="1295.0" y="661.0" width="14.55" height="117.2" fill="#60a5fa"/>
<rect x="1321.5" y="635.5" width="14.7" height="142.7" fill="#4ade80"/>
<rect x="1321.5" y="778.2" width="14.7" height="25.5" fill="#f87171"/>
<rect x="1339.0" y="661.0" width="14.55" height="117.2" fill="#60a5fa"/>
<rect x="1365.5" y="635.5" width="14.7" height="142.7" fill="#4ade80"/>
<rect x="1365.5" y="778.2" width="14.7" height="66.7" fill="#f87171"/>
<rect x="1383.0" y="702.2" width="14.55" height="76.0" fill="#60a5fa"/>
<rect x="1409.5" y="635.5" width="14.7" height="142.7" fill="#4ade80"/>
<rect x="1409.5" y="778.2" width="14.7" height="25.5" fill="#f87171"/>
<rect x="1427.0" y="661.0" width="14.55" height="117.2" fill="#60a5fa"/>
<rect x="1453.5" y="635.5" width="14.7" height="142.7" fill="#4ade80"/>
<rect x="1453.5" y="778.2" width="14.7" height="25.5" fill="#f87171"/>
<rect x="1471.0" y="661.0" width="14.55" height="117.2" fill="#60a5fa"/>
<rect x="1497.5" y="635.5" width="14.7" height="142.7" fill="#4ade80"/>
<rect x="1497.5" y="778.2" width="14.7" height="66.7" fill="#f87171"/>
<rect x="1515.0" y="702.2" width="14.55" height="76.0" fill="#60a5fa"/>
<rect x="1541.5" y="635.5" width="14.7" height="142.7" fill="#4ade80"/>
<rect x="1541.5" y="778.2" width="14.7" height="53.0" fill="#f87171"/>
<rect x="1559.0" y="688.4" width="14.55" height="89.8" fill="#60a5fa"/>
<rect x="1585.5" y="635.5" width="14.7" height="142.7" fill="#4ade80"/>
<rect x="1585.5" y="778.2" width="14.7" height="25.5" fill="#f87171"/>
<rect x="1603.0" y="661.0" width="14.55" height="117.2" fill="#60a5fa"/>
<rect x="1629.5" y="635.5" width="14.7" height="142.7" fill="#4ade80"/>
<rect x="1629.5" y="778.2" width="14.7" height="66.7" fill="#f87171"/>
<rect x="1647.0" y="702.2" width="14.55" height="76.0" fill="#60a5fa"/>
<rect x="1673.5" y="635.5" width="14.7" height="142.7" fill="#4ade80"/>
<rect x="1673.5" y="778.2" width="14.7" height="25.5" fill="#f87171"/>
<rect x="1691.0" y="661.0" width="14.55" height="117.2" fill="#60a5fa"/>
<rect x="1717.5" y="635.5" width="14.7" height="142.7" fill="#4ade80"/>
<rect x="1717.5" y="778.2" width="14.7" height="58.5" fill="#f87171"/>
<rect x="1735.0" y="693.9" width="14.55" height="84.3" fill="#60a5fa"/>
<rect x="1761.5" y="553.1" width="14.7" height="225.1" fill="#4ade80"/>
<rect x="1761.5" y="778.2" width="14.7" height="77.7" fill="#f87171"/>
<rect x="1779.0" y="630.8" width="14.55" height="147.4" fill="#60a5fa"/>
<text x="1293.64" y="909.0" text-anchor="middle" font-size="15" fill="#525b6c" letter-spacing="-0.478">Jan 2025</text>
<text x="1382.14" y="909.0" text-anchor="middle" font-size="15" fill="#525b6c" letter-spacing="-0.483">Mar 2025</text>
<text x="1470.15" y="909.0" text-anchor="middle" font-size="15" fill="#525b6c" letter-spacing="-0.503">May 2025</text>
<text x="1557.62" y="909.0" text-anchor="middle" font-size="15" fill="#525b6c" letter-spacing="-0.439">Jul 2025</text>
<text x="1645.87" y="909.0" text-anchor="middle" font-size="15" fill="#525b6c" letter-spacing="-0.494">Sep 2025</text>
<text x="1734.15" y="909.0" text-anchor="middle" font-size="15" fill="#525b6c" letter-spacing="-0.490">Nov 2025</text>
<text x="1821.63" y="909.0" text-anchor="middle" font-size="15" fill="#525b6c" letter-spacing="-0.478">Jan 2026</text>
<rect x="1404.4" y="434.25" width="31.25" height="17.5" rx="4" fill="#4ade80"/>
<text x="1440.92" y="446.4" text-anchor="start" font-size="15" fill="#525b6c" letter-spacing="0.332">Income</text>
<rect x="1503.6" y="434.25" width="31.25" height="17.5" rx="4" fill="#f87171"/>
<text x="1539.77" y="446.4" text-anchor="start" font-size="15" fill="#525b6c" letter-spacing="-0.500">Expenses</text>
<rect x="1614" y="434.25" width="31.25" height="17.5" rx="4" fill="#60a5fa"/>
<text x="1650.37" y="446.4" text-anchor="start" font-size="15" fill="#525b6c" letter-spacing="1.149">Net</text>
<line x1="534.3" x2="1620.1" y1="1515.1" y2="1515.1" stroke="#e6e8ed" stroke-width="1.25"/>
<text x="524.42" y="1518.5400000000002" text-anchor="end" font-size="15" fill="#525b6c" letter-spacing="-0.150">-20K</text>
<line x1="534.3" x2="1620.1" y1="1456.6" y2="1456.6" stroke="#e6e8ed" stroke-width="1.25"/>
<text x="524.42" y="1459.97" text-anchor="end" font-size="15" fill="#525b6c" letter-spacing="-0.150">-10K</text>
<text x="524.99" y="1401.4" text-anchor="end" font-size="15" fill="#525b6c">0</text>
<line x1="534.3" x2="1620.1" y1="1339.4" y2="1339.4" stroke="#e6e8ed" stroke-width="1.25"/>
<text x="524.13" y="1342.8300000000002" text-anchor="end" font-size="15" fill="#525b6c" letter-spacing="-0.439">10K</text>
<line x1="534.3" x2="1620.1" y1="1280.9" y2="1280.9" stroke="#e6e8ed" stroke-width="1.25"/>
<text x="523.94" y="1284.26" text-anchor="end" font-size="15" fill="#525b6c" letter-spacing="-0.633">20K</text>
<line x1="534.3" x2="1620.1" y1="1222.3" y2="1222.3" stroke="#e6e8ed" stroke-width="1.25"/>
<text x="523.84" y="1225.69" text-anchor="end" font-size="15" fill="#525b6c" letter-spacing="-0.725">30K</text>
<line x1="534.3" x2="1620.1" y1="1163.7" y2="1163.7" stroke="#e6e8ed" stroke-width="1.25"/>
<text x="523.73" y="1167.1200000000001" text-anchor="end" font-size="15" fill="#525b6c" letter-spacing="-0.838">40K</text>
<line x1="534.3" x2="1620.1" y1="1105.2" y2="1105.2" stroke="#e6e8ed" stroke-width="1.25"/>
<text x="523.86" y="1108.5500000000002" text-anchor="end" font-size="15" fill="#525b6c" letter-spacing="-0.710">50K</text>
<line x1="534.3" x2="1620.1" y1="1398.0" y2="1398.0" stroke="#7d8491" stroke-width="1.25"/>
<line x1="534.3" x2="534.3" y1="1398.0" y2="1404.5" stroke="#7d8491" stroke-width="1.25"/>
<line x1="624.8" x2="624.8" y1="1398.0" y2="1404.5" stroke="#7d8491" stroke-width="1.25"/>
<line x1="715.3" x2="715.3" y1="1398.0" y2="1404.5" stroke="#7d8491" stroke-width="1.25"/>
<line x1="805.7" x2="805.7" y1="1398.0" y2="1404.5" stroke="#7d8491" stroke-width="1.25"/>
<line x1="896.2" x2="896.2" y1="1398.0" y2="1404.5" stroke="#7d8491" stroke-width="1.25"/>
<line x1="986.7" x2="986.7" y1="1398.0" y2="1404.5" stroke="#7d8491" stroke-width="1.25"/>
<line x1="1077.2" x2="1077.2" y1="1398.0" y2="1404.5" stroke="#7d8491" stroke-width="1.25"/>
<line x1="1167.7" x2="1167.7" y1="1398.0" y2="1404.5" stroke="#7d8491" stroke-width="1.25"/>
<line x1="1258.1" x2="1258.1" y1="1398.0" y2="1404.5" stroke="#7d8491" stroke-width="1.25"/>
<line x1="1348.6" x2="1348.6" y1="1398.0" y2="1404.5" stroke="#7d8491" stroke-width="1.25"/>
<line x1="1439.1" x2="1439.1" y1="1398.0" y2="1404.5" stroke="#7d8491" stroke-width="1.25"/>
<line x1="1529.6" x2="1529.6" y1="1398.0" y2="1404.5" stroke="#7d8491" stroke-width="1.25"/>
<line x1="1620.1" x2="1620.1" y1="1398.0" y2="1404.5" stroke="#7d8491" stroke-width="1.25"/>
<rect x="541.3" y="1245.7" width="31.3" height="152.3" fill="#059669"/>
<rect x="541.3" y="1398.0" width="31.3" height="20.5" fill="#dc2626"/>
<rect x="541.3" y="1418.5" width="31.3" height="4.7" fill="#ea580c"/>
<rect x="541.3" y="1423.2" width="31.3" height="2.0" fill="#b91c1c"/>
<rect x="586.5" y="1245.7" width="31.3" height="152.3" fill="#059669"/>
<rect x="586.5" y="1398.0" width="31.3" height="20.5" fill="#dc2626"/>
<rect x="586.5" y="1418.5" width="31.3" height="4.7" fill="#ea580c"/>
<rect x="586.5" y="1423.2" width="31.3" height="2.0" fill="#b91c1c"/>
<rect x="631.8" y="1245.7" width="31.3" height="152.3" fill="#059669"/>
<rect x="631.8" y="1398.0" width="31.3" height="20.5" fill="#dc2626"/>
<rect x="631.8" y="1418.5" width="31.3" height="4.7" fill="#ea580c"/>
<rect x="631.8" y="1423.2" width="31.3" height="2.0" fill="#b91c1c"/>
<rect x="631.8" y="1425.2" width="31.3" height="43.9" fill="#fb923c"/>
<rect x="677.0" y="1245.7" width="31.3" height="152.3" fill="#059669"/>
<rect x="677.0" y="1398.0" width="31.3" height="20.5" fill="#dc2626"/>
<rect x="677.0" y="1418.5" width="31.3" height="4.7" fill="#ea580c"/>
<rect x="677.0" y="1423.2" width="31.3" height="2.0" fill="#b91c1c"/>
<rect x="722.2" y="1245.7" width="31.3" height="152.3" fill="#059669"/>
<rect x="722.2" y="1398.0" width="31.3" height="20.5" fill="#dc2626"/>
<rect x="722.2" y="1418.5" width="31.3" height="4.7" fill="#ea580c"/>
<rect x="722.2" y="1423.2" width="31.3" height="2.0" fill="#b91c1c"/>
<rect x="767.5" y="1245.7" width="31.3" height="152.3" fill="#059669"/>
<rect x="767.5" y="1398.0" width="31.3" height="20.5" fill="#dc2626"/>
<rect x="767.5" y="1418.5" width="31.3" height="4.7" fill="#ea580c"/>
<rect x="767.5" y="1423.2" width="31.3" height="2.0" fill="#b91c1c"/>
<rect x="767.5" y="1425.2" width="31.3" height="43.9" fill="#fb923c"/>
<rect x="812.7" y="1245.7" width="31.3" height="152.3" fill="#059669"/>
<rect x="812.7" y="1398.0" width="31.3" height="20.5" fill="#dc2626"/>
<rect x="812.7" y="1418.5" width="31.3" height="4.7" fill="#ea580c"/>
<rect x="812.7" y="1423.2" width="31.3" height="2.0" fill="#b91c1c"/>
<rect x="812.7" y="1425.2" width="31.3" height="29.3" fill="#ef4444"/>
<rect x="858.0" y="1245.7" width="31.3" height="152.3" fill="#059669"/>
<rect x="858.0" y="1398.0" width="31.3" height="20.5" fill="#dc2626"/>
<rect x="858.0" y="1418.5" width="31.3" height="4.7" fill="#ea580c"/>
<rect x="858.0" y="1423.2" width="31.3" height="2.0" fill="#b91c1c"/>
<rect x="903.2" y="1245.7" width="31.3" height="152.3" fill="#059669"/>
<rect x="903.2" y="1398.0" width="31.3" height="20.5" fill="#dc2626"/>
<rect x="903.2" y="1418.5" width="31.3" height="4.7" fill="#ea580c"/>
<rect x="903.2" y="1423.2" width="31.3" height="2.0" fill="#b91c1c"/>
<rect x="903.2" y="1425.2" width="31.3" height="43.9" fill="#fb923c"/>
<rect x="948.4" y="1245.7" width="31.3" height="152.3" fill="#059669"/>
<rect x="948.4" y="1398.0" width="31.3" height="20.5" fill="#dc2626"/>
<rect x="948.4" y="1418.5" width="31.3" height="4.7" fill="#ea580c"/>
<rect x="948.4" y="1423.2" width="31.3" height="2.0" fill="#b91c1c"/>
<rect x="993.7" y="1245.7" width="31.3" height="152.3" fill="#059669"/>
<rect x="993.7" y="1398.0" width="31.3" height="20.5" fill="#dc2626"/>
<rect x="993.7" y="1418.5" width="31.3" height="4.7" fill="#ea580c"/>
<rect x="993.7" y="1423.2" width="31.3" height="2.0" fill="#b91c1c"/>
<rect x="993.7" y="1425.2" width="31.3" height="35.1" fill="#fb923c"/>
<rect x="1038.9" y="1157.9" width="31.3" height="240.1" fill="#059669"/>
<rect x="1038.9" y="1398.0" width="31.3" height="20.5" fill="#dc2626"/>
<rect x="1038.9" y="1418.5" width="31.3" height="4.7" fill="#ea580c"/>
<rect x="1038.9" y="1423.2" width="31.3" height="2.0" fill="#b91c1c"/>
<rect x="1038.9" y="1425.2" width="31.3" height="43.9" fill="#fb923c"/>
<rect x="1038.9" y="1469.2" width="31.3" height="11.7" fill="#9a3412"/>
<rect x="1084.1" y="1245.7" width="31.3" height="152.3" fill="#059669"/>
<rect x="1084.1" y="1398.0" width="31.3" height="20.5" fill="#dc2626"/>
<rect x="1084.1" y="1418.5" width="31.3" height="4.7" fill="#ea580c"/>
<rect x="1084.1" y="1423.2" width="31.3" height="2.0" fill="#b91c1c"/>
<rect x="1129.4" y="1245.7" width="31.3" height="152.3" fill="#059669"/>
<rect x="1129.4" y="1398.0" width="31.3" height="20.5" fill="#dc2626"/>
<rect x="1129.4" y="1418.5" width="31.3" height="4.7" fill="#ea580c"/>
<rect x="1129.4" y="1423.2" width="31.3" height="2.0" fill="#b91c1c"/>
<rect x="1174.6" y="1245.7" width="31.3" height="152.3" fill="#059669"/>
<rect x="1174.6" y="1398.0" width="31.3" height="20.5" fill="#dc2626"/>
<rect x="1174.6" y="1418.5" width="31.3" height="4.7" fill="#ea580c"/>
<rect x="1174.6" y="1423.2" width="31.3" height="2.0" fill="#b91c1c"/>
<rect x="1174.6" y="1425.2" width="31.3" height="43.9" fill="#fb923c"/>
<rect x="1219.9" y="1245.7" width="31.3" height="152.3" fill="#059669"/>
<rect x="1219.9" y="1398.0" width="31.3" height="20.5" fill="#dc2626"/>
<rect x="1219.9" y="1418.5" width="31.3" height="4.7" fill="#ea580c"/>
<rect x="1219.9" y="1423.2" width="31.3" height="2.0" fill="#b91c1c"/>
<rect x="1265.1" y="1245.7" width="31.3" height="152.3" fill="#059669"/>
<rect x="1265.1" y="1398.0" width="31.3" height="20.5" fill="#dc2626"/>
<rect x="1265.1" y="1418.5" width="31.3" height="4.7" fill="#ea580c"/>
<rect x="1265.1" y="1423.2" width="31.3" height="2.0" fill="#b91c1c"/>
<rect x="1310.4" y="1245.7" width="31.3" height="152.3" fill="#059669"/>
<rect x="1310.4" y="1398.0" width="31.3" height="20.5" fill="#dc2626"/>
<rect x="1310.4" y="1418.5" width="31.3" height="4.7" fill="#ea580c"/>
<rect x="1310.4" y="1423.2" width="31.3" height="2.0" fill="#b91c1c"/>
<rect x="1310.4" y="1425.2" width="31.3" height="43.9" fill="#fb923c"/>
<rect x="1355.6" y="1245.7" width="31.3" height="152.3" fill="#059669"/>
<rect x="1355.6" y="1398.0" width="31.3" height="20.5" fill="#dc2626"/>
<rect x="1355.6" y="1418.5" width="31.3" height="4.7" fill="#ea580c"/>
<rect x="1355.6" y="1423.2" width="31.3" height="2.0" fill="#b91c1c"/>
<rect x="1355.6" y="1425.2" width="31.3" height="29.3" fill="#ef4444"/>
<rect x="1400.8" y="1245.7" width="31.3" height="152.3" fill="#059669"/>
<rect x="1400.8" y="1398.0" width="31.3" height="20.5" fill="#dc2626"/>
<rect x="1400.8" y="1418.5" width="31.3" height="4.7" fill="#ea580c"/>
<rect x="1400.8" y="1423.2" width="31.3" height="2.0" fill="#b91c1c"/>
<rect x="1446.1" y="1245.7" width="31.3" height="152.3" fill="#059669"/>
<rect x="1446.1" y="1398.0" width="31.3" height="20.5" fill="#dc2626"/>
<rect x="1446.1" y="1418.5" width="31.3" height="4.7" fill="#ea580c"/>
<rect x="1446.1" y="1423.2" width="31.3" height="2.0" fill="#b91c1c"/>
<rect x="1446.1" y="1425.2" width="31.3" height="43.9" fill="#fb923c"/>
<rect x="1491.3" y="1245.7" width="31.3" height="152.3" fill="#059669"/>
<rect x="1491.3" y="1398.0" width="31.3" height="20.5" fill="#dc2626"/>
<rect x="1491.3" y="1418.5" width="31.3" height="4.7" fill="#ea580c"/>
<rect x="1491.3" y="1423.2" width="31.3" height="2.0" fill="#b91c1c"/>
<rect x="1536.5" y="1245.7" width="31.3" height="152.3" fill="#059669"/>
<rect x="1536.5" y="1398.0" width="31.3" height="20.5" fill="#dc2626"/>
<rect x="1536.5" y="1418.5" width="31.3" height="4.7" fill="#ea580c"/>
<rect x="1536.5" y="1423.2" width="31.3" height="2.0" fill="#b91c1c"/>
<rect x="1536.5" y="1425.2" width="31.3" height="35.1" fill="#fb923c"/>
<rect x="1581.8" y="1157.9" width="31.3" height="240.1" fill="#059669"/>
<rect x="1581.8" y="1398.0" width="31.3" height="20.5" fill="#dc2626"/>
<rect x="1581.8" y="1418.5" width="31.3" height="4.7" fill="#ea580c"/>
<rect x="1581.8" y="1423.2" width="31.3" height="2.0" fill="#b91c1c"/>
<rect x="1581.8" y="1425.2" width="31.3" height="43.9" fill="#fb923c"/>
<rect x="1581.8" y="1469.2" width="31.3" height="11.7" fill="#9a3412"/>
<polyline points="556.9,1273.0 602.2,1273.0 647.4,1316.9 692.6,1273.0 737.9,1273.0 783.1,1316.9 828.4,1302.2 873.6,1273.0 918.8,1316.9 964.1,1273.0 1009.3,1308.1 1054.6,1240.7 1099.8,1273.0 1145.0,1273.0 1190.3,1316.9 1235.5,1273.0 1280.8,1273.0 1326.0,1316.9 1371.2,1302.2 1416.5,1273.0 1461.7,1316.9 1507.0,1273.0 1552.2,1308.1 1597.4,1240.7" fill="none" stroke="#fbbf24" stroke-width="2.5" stroke-linejoin="round"/>
<circle cx="556.9" cy="1273.0" r="5.6" fill="#fbbf24"/>
<circle cx="602.2" cy="1273.0" r="5.6" fill="#fbbf24"/>
<circle cx="647.4" cy="1316.9" r="5.6" fill="#fbbf24"/>
<circle cx="692.6" cy="1273.0" r="5.6" fill="#fbbf24"/>
<circle cx="737.9" cy="1273.0" r="5.6" fill="#fbbf24"/>
<circle cx="783.1" cy="1316.9" r="5.6" fill="#fbbf24"/>
<circle cx="828.4" cy="1302.2" r="5.6" fill="#fbbf24"/>
<circle cx="873.6" cy="1273.0" r="5.6" fill="#fbbf24"/>
<circle cx="918.8" cy="1316.9" r="5.6" fill="#fbbf24"/>
<circle cx="964.1" cy="1273.0" r="5.6" fill="#fbbf24"/>
<circle cx="1009.3" cy="1308.1" r="5.6" fill="#fbbf24"/>
<circle cx="1054.6" cy="1240.7" r="5.6" fill="#fbbf24"/>
<circle cx="1099.8" cy="1273.0" r="5.6" fill="#fbbf24"/>
<circle cx="1145.0" cy="1273.0" r="5.6" fill="#fbbf24"/>
<circle cx="1190.3" cy="1316.9" r="5.6" fill="#fbbf24"/>
<circle cx="1235.5" cy="1273.0" r="5.6" fill="#fbbf24"/>
<circle cx="1280.8" cy="1273.0" r="5.6" fill="#fbbf24"/>
<circle cx="1326.0" cy="1316.9" r="5.6" fill="#fbbf24"/>
<circle cx="1371.2" cy="1302.2" r="5.6" fill="#fbbf24"/>
<circle cx="1416.5" cy="1273.0" r="5.6" fill="#fbbf24"/>
<circle cx="1461.7" cy="1316.9" r="5.6" fill="#fbbf24"/>
<circle cx="1507.0" cy="1273.0" r="5.6" fill="#fbbf24"/>
<circle cx="1552.2" cy="1308.1" r="5.6" fill="#fbbf24"/>
<circle cx="1597.4" cy="1240.7" r="5.6" fill="#fbbf24"/>
<text x="557.85" y="1537" text-anchor="middle" font-size="15" fill="#525b6c" letter-spacing="-0.490">Dec 2023</text>
<text x="648.44" y="1537" text-anchor="middle" font-size="15" fill="#525b6c" letter-spacing="-0.485">Feb 2024</text>
<text x="738.31" y="1537" text-anchor="middle" font-size="15" fill="#525b6c" letter-spacing="-0.475">Apr 2024</text>
<text x="828.90" y="1537" text-anchor="middle" font-size="15" fill="#525b6c" letter-spacing="-0.480">Jun 2024</text>
<text x="919.29" y="1537" text-anchor="middle" font-size="15" fill="#525b6c" letter-spacing="-0.501">Aug 2024</text>
<text x="1010.09" y="1537" text-anchor="middle" font-size="15" fill="#525b6c" letter-spacing="-0.469">Oct 2024</text>
<text x="1100.84" y="1537" text-anchor="middle" font-size="15" fill="#525b6c" letter-spacing="-0.491">Dec 2024</text>
<text x="1191.22" y="1537" text-anchor="middle" font-size="15" fill="#525b6c" letter-spacing="-0.483">Feb 2025</text>
<text x="1281.10" y="1537" text-anchor="middle" font-size="15" fill="#525b6c" letter-spacing="-0.473">Apr 2025</text>
<text x="1371.68" y="1537" text-anchor="middle" font-size="15" fill="#525b6c" letter-spacing="-0.478">Jun 2025</text>
<text x="1462.07" y="1537" text-anchor="middle" font-size="15" fill="#525b6c" letter-spacing="-0.499">Aug 2025</text>
<text x="1552.87" y="1537" text-anchor="middle" font-size="15" fill="#525b6c" letter-spacing="-0.468">Oct 2025</text>
<rect x="1730" y="1226.25" width="31.25" height="17.5" rx="4" fill="#059669"/>
<text x="1766.47" y="1239.7" text-anchor="start" font-size="15" fill="#525b6c" letter-spacing="0.108">Employment</text>
<rect x="1730" y="1256.25" width="31.25" height="17.5" rx="4" fill="#dc2626"/>
<text x="1766.47" y="1269.7" text-anchor="start" font-size="15" fill="#525b6c" letter-spacing="0.227">Housing</text>
<rect x="1730" y="1286.25" width="31.25" height="17.5" rx="4" fill="#ea580c"/>
<text x="1766.47" y="1299.7" text-anchor="start" font-size="15" fill="#525b6c" letter-spacing="0.269">Food</text>
<rect x="1730" y="1316.25" width="31.25" height="17.5" rx="4" fill="#b91c1c"/>
<text x="1766.54" y="1329.7" text-anchor="start" font-size="15" fill="#525b6c" letter-spacing="0.257">Utilities</text>
<rect x="1730" y="1346.25" width="31.25" height="17.5" rx="4" fill="#fb923c"/>
<text x="1767.36" y="1359.7" text-anchor="start" font-size="15" fill="#525b6c" letter-spacing="-0.976">Taxes</text>
<rect x="1730" y="1376.25" width="31.25" height="17.5" rx="4" fill="#ef4444"/>
<text x="1767.36" y="1389.7" text-anchor="start" font-size="15" fill="#525b6c" letter-spacing="-0.436">Travel</text>
<rect x="1730" y="1406.25" width="31.25" height="17.5" rx="4" fill="#9a3412"/>
<text x="1767.02" y="1419.7" text-anchor="start" font-size="15" fill="#525b6c" letter-spacing="0.180">Shopping</text>
<line x1="1730" x2="1761.25" y1="1444.5" y2="1444.5" stroke="#fbbf24" stroke-width="2.5"/><circle cx="1745.6" cy="1444.5" r="7" fill="#fbbf24"/>
<text x="1766.47" y="1448.5" text-anchor="start" font-size="15" fill="#525b6c" letter-spacing="0.849">Net</text>
</svg>
<div class="a" style="left:1855px;top:804.0px;width:43px;height:43px;border-radius:50%;background:#f1f4f9;border:1px solid #dbe2ee;box-shadow:0 12px 18px -4px rgba(15,23,42,0.10),0 5px 7px -5px rgba(15,23,42,0.10)"></div>
<svg class="a" style="left:1868.2px;top:816.8px" width="20" height="20" viewBox="0 0 24 24" fill="none" stroke="#1d2338" stroke-width="2" stroke-linecap="round" stroke-linejoin="round" ><path d="M21 15a2 2 0 0 1-2 2H7l-4 4V5a2 2 0 0 1 2-2h14a2 2 0 0 1 2 2z"/></svg>
<div class="a" style="left:1855px;top:1475.1px;width:43px;height:43px;border-radius:50%;background:#f1f4f9;border:1px solid #dbe2ee;box-shadow:0 12px 18px -4px rgba(15,23,42,0.10),0 5px 7px -5px rgba(15,23,42,0.10)"></div>
<svg class="a" style="left:1868.2px;top:1487.9px" width="20" height="20" viewBox="0 0 24 24" fill="none" stroke="#1d2338" stroke-width="2" stroke-linecap="round" stroke-linejoin="round" ><path d="M21 15a2 2 0 0 1-2 2H7l-4 4V5a2 2 0 0 1 2-2h14a2 2 0 0 1 2 2z"/></svg>
</main>
</body></html>
